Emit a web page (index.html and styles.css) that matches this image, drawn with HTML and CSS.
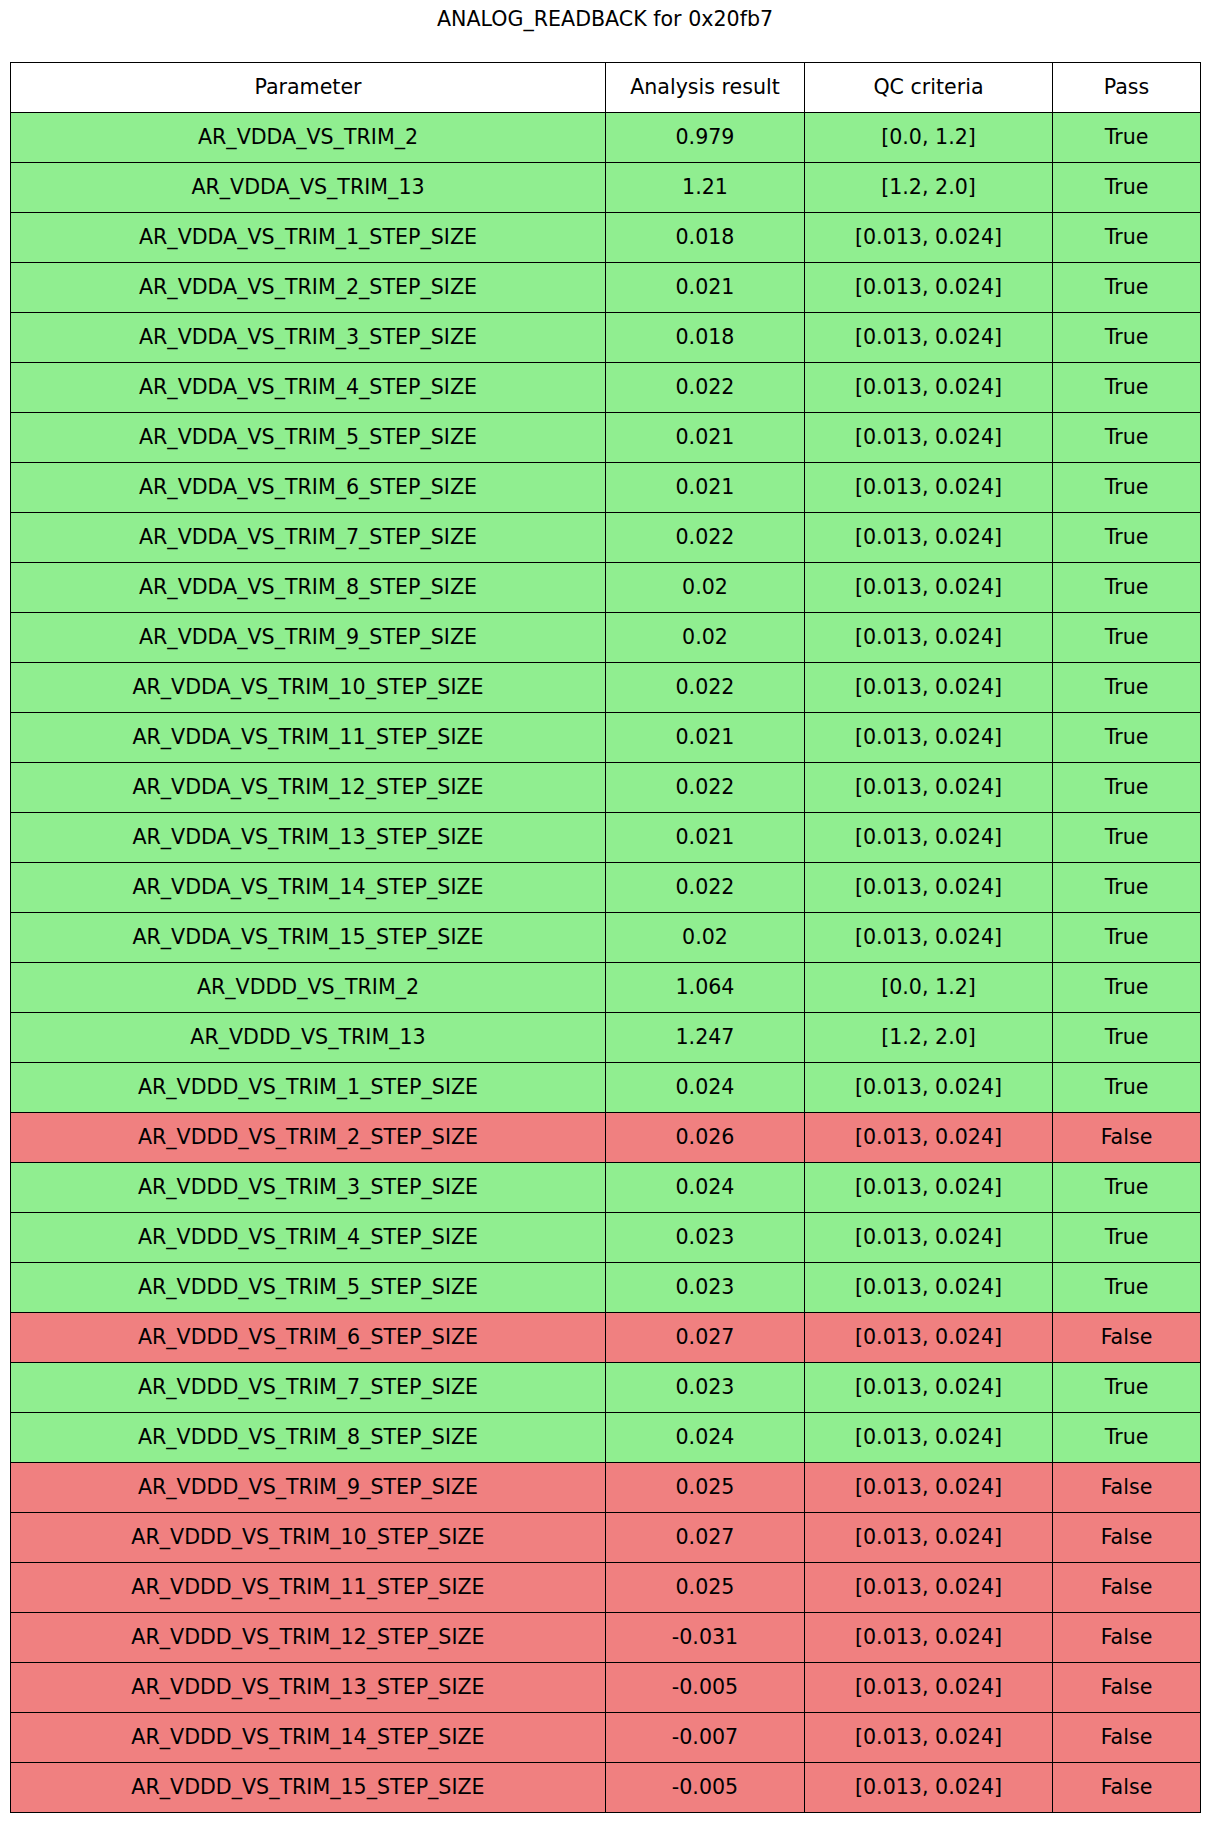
FILE: index.html
```html
<!DOCTYPE html>
<html>
<head>
<meta charset="utf-8">
<link rel="stylesheet" href="styles.css">
</head>
<body>
<div class="title">ANALOG_READBACK for 0x20fb7</div>
<div class="qc-table">
  <div class="cell head">Parameter</div><div class="cell head">Analysis result</div><div class="cell head">QC criteria</div><div class="cell head">Pass</div>

  <div class="cell ok">AR_VDDA_VS_TRIM_2</div><div class="cell ok">0.979</div><div class="cell ok">[0.0, 1.2]</div><div class="cell ok">True</div>
  <div class="cell ok">AR_VDDA_VS_TRIM_13</div><div class="cell ok">1.21</div><div class="cell ok">[1.2, 2.0]</div><div class="cell ok">True</div>
  <div class="cell ok">AR_VDDA_VS_TRIM_1_STEP_SIZE</div><div class="cell ok">0.018</div><div class="cell ok">[0.013, 0.024]</div><div class="cell ok">True</div>
  <div class="cell ok">AR_VDDA_VS_TRIM_2_STEP_SIZE</div><div class="cell ok">0.021</div><div class="cell ok">[0.013, 0.024]</div><div class="cell ok">True</div>
  <div class="cell ok">AR_VDDA_VS_TRIM_3_STEP_SIZE</div><div class="cell ok">0.018</div><div class="cell ok">[0.013, 0.024]</div><div class="cell ok">True</div>
  <div class="cell ok">AR_VDDA_VS_TRIM_4_STEP_SIZE</div><div class="cell ok">0.022</div><div class="cell ok">[0.013, 0.024]</div><div class="cell ok">True</div>
  <div class="cell ok">AR_VDDA_VS_TRIM_5_STEP_SIZE</div><div class="cell ok">0.021</div><div class="cell ok">[0.013, 0.024]</div><div class="cell ok">True</div>
  <div class="cell ok">AR_VDDA_VS_TRIM_6_STEP_SIZE</div><div class="cell ok">0.021</div><div class="cell ok">[0.013, 0.024]</div><div class="cell ok">True</div>
  <div class="cell ok">AR_VDDA_VS_TRIM_7_STEP_SIZE</div><div class="cell ok">0.022</div><div class="cell ok">[0.013, 0.024]</div><div class="cell ok">True</div>
  <div class="cell ok">AR_VDDA_VS_TRIM_8_STEP_SIZE</div><div class="cell ok">0.02</div><div class="cell ok">[0.013, 0.024]</div><div class="cell ok">True</div>
  <div class="cell ok">AR_VDDA_VS_TRIM_9_STEP_SIZE</div><div class="cell ok">0.02</div><div class="cell ok">[0.013, 0.024]</div><div class="cell ok">True</div>
  <div class="cell ok">AR_VDDA_VS_TRIM_10_STEP_SIZE</div><div class="cell ok">0.022</div><div class="cell ok">[0.013, 0.024]</div><div class="cell ok">True</div>
  <div class="cell ok">AR_VDDA_VS_TRIM_11_STEP_SIZE</div><div class="cell ok">0.021</div><div class="cell ok">[0.013, 0.024]</div><div class="cell ok">True</div>
  <div class="cell ok">AR_VDDA_VS_TRIM_12_STEP_SIZE</div><div class="cell ok">0.022</div><div class="cell ok">[0.013, 0.024]</div><div class="cell ok">True</div>
  <div class="cell ok">AR_VDDA_VS_TRIM_13_STEP_SIZE</div><div class="cell ok">0.021</div><div class="cell ok">[0.013, 0.024]</div><div class="cell ok">True</div>
  <div class="cell ok">AR_VDDA_VS_TRIM_14_STEP_SIZE</div><div class="cell ok">0.022</div><div class="cell ok">[0.013, 0.024]</div><div class="cell ok">True</div>
  <div class="cell ok">AR_VDDA_VS_TRIM_15_STEP_SIZE</div><div class="cell ok">0.02</div><div class="cell ok">[0.013, 0.024]</div><div class="cell ok">True</div>

  <div class="cell ok">AR_VDDD_VS_TRIM_2</div><div class="cell ok">1.064</div><div class="cell ok">[0.0, 1.2]</div><div class="cell ok">True</div>
  <div class="cell ok">AR_VDDD_VS_TRIM_13</div><div class="cell ok">1.247</div><div class="cell ok">[1.2, 2.0]</div><div class="cell ok">True</div>
  <div class="cell ok">AR_VDDD_VS_TRIM_1_STEP_SIZE</div><div class="cell ok">0.024</div><div class="cell ok">[0.013, 0.024]</div><div class="cell ok">True</div>
  <div class="cell bad">AR_VDDD_VS_TRIM_2_STEP_SIZE</div><div class="cell bad">0.026</div><div class="cell bad">[0.013, 0.024]</div><div class="cell bad">False</div>
  <div class="cell ok">AR_VDDD_VS_TRIM_3_STEP_SIZE</div><div class="cell ok">0.024</div><div class="cell ok">[0.013, 0.024]</div><div class="cell ok">True</div>
  <div class="cell ok">AR_VDDD_VS_TRIM_4_STEP_SIZE</div><div class="cell ok">0.023</div><div class="cell ok">[0.013, 0.024]</div><div class="cell ok">True</div>
  <div class="cell ok">AR_VDDD_VS_TRIM_5_STEP_SIZE</div><div class="cell ok">0.023</div><div class="cell ok">[0.013, 0.024]</div><div class="cell ok">True</div>
  <div class="cell bad">AR_VDDD_VS_TRIM_6_STEP_SIZE</div><div class="cell bad">0.027</div><div class="cell bad">[0.013, 0.024]</div><div class="cell bad">False</div>
  <div class="cell ok">AR_VDDD_VS_TRIM_7_STEP_SIZE</div><div class="cell ok">0.023</div><div class="cell ok">[0.013, 0.024]</div><div class="cell ok">True</div>
  <div class="cell ok">AR_VDDD_VS_TRIM_8_STEP_SIZE</div><div class="cell ok">0.024</div><div class="cell ok">[0.013, 0.024]</div><div class="cell ok">True</div>
  <div class="cell bad">AR_VDDD_VS_TRIM_9_STEP_SIZE</div><div class="cell bad">0.025</div><div class="cell bad">[0.013, 0.024]</div><div class="cell bad">False</div>
  <div class="cell bad">AR_VDDD_VS_TRIM_10_STEP_SIZE</div><div class="cell bad">0.027</div><div class="cell bad">[0.013, 0.024]</div><div class="cell bad">False</div>
  <div class="cell bad">AR_VDDD_VS_TRIM_11_STEP_SIZE</div><div class="cell bad">0.025</div><div class="cell bad">[0.013, 0.024]</div><div class="cell bad">False</div>
  <div class="cell bad">AR_VDDD_VS_TRIM_12_STEP_SIZE</div><div class="cell bad">-0.031</div><div class="cell bad">[0.013, 0.024]</div><div class="cell bad">False</div>
  <div class="cell bad">AR_VDDD_VS_TRIM_13_STEP_SIZE</div><div class="cell bad">-0.005</div><div class="cell bad">[0.013, 0.024]</div><div class="cell bad">False</div>
  <div class="cell bad">AR_VDDD_VS_TRIM_14_STEP_SIZE</div><div class="cell bad">-0.007</div><div class="cell bad">[0.013, 0.024]</div><div class="cell bad">False</div>
  <div class="cell bad">AR_VDDD_VS_TRIM_15_STEP_SIZE</div><div class="cell bad">-0.005</div><div class="cell bad">[0.013, 0.024]</div><div class="cell bad">False</div>
</div>
</body>
</html>
```
FILE: styles.css
```css
html, body {
  margin: 0;
  padding: 0;
  background: #ffffff;
}

body {
  font-family: "DejaVu Sans", sans-serif;
  font-size: 20.6px;
  color: #000000;
  width: 1210px;
}

.title {
  height: 62px;
  padding-top: 7px;
  box-sizing: border-box;
  line-height: 24px;
  text-align: center;
}

.qc-table {
  margin-left: 10px;
  display: grid;
  grid-template-columns: 595px 199px 248px 148px;
  grid-auto-rows: 50px;
  width: 1190px;
  border-top: 1px solid #000;
  border-left: 1px solid #000;
}

.cell {
  display: flex;
  align-items: center;
  justify-content: center;
  padding-bottom: 2px;
  border-right: 1px solid #000;
  border-bottom: 1px solid #000;
  white-space: nowrap;
  line-height: 24px;
}

.head {
  background: #ffffff;
}

.ok {
  background: #90ee90;
}

.bad {
  background: #f08080;
}
```
